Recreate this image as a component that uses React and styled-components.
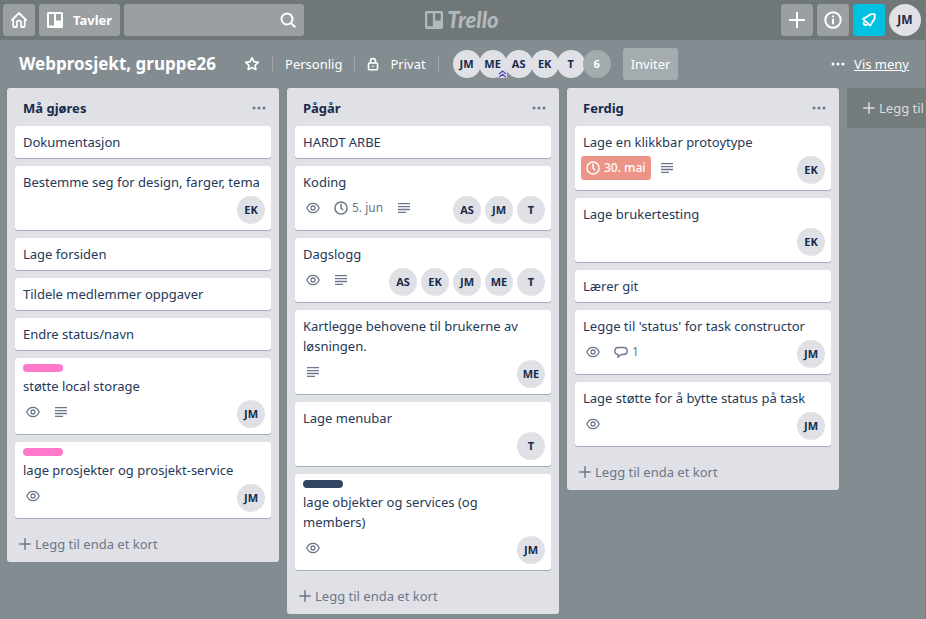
import React from "react";
import styled, { createGlobalStyle, css } from "styled-components";

const GlobalStyle = createGlobalStyle`
  *, *::before, *::after { box-sizing: border-box; }
  html, body, #root { height: 100%; }
  body {
    margin: 0;
    background: #838c91;
    color: #172b4d;
    font-family: "Noto Sans", "Open Sans", sans-serif;
    font-size: 13px;
    line-height: 20px;
  }
  button, input { font: inherit; color: inherit; }
  button { border: 0; padding: 0; background: none; cursor: pointer; }
  svg { display: block; flex: none; }
`;

const Page = styled.div`
  display: flex;
  flex-direction: column;
  min-height: 100vh;
  overflow: hidden;
  border-right: 1px solid #4c83c3;
`;

const TopBar = styled.header`
  display: grid;
  grid-template-columns: 1fr auto 1fr;
  align-items: center;
  padding: 4px 4px 4px 3px;
  background: #6f7779;
`;

const BarGroup = styled.div`
  display: flex;
  gap: 4px;
  justify-content: ${(p) => (p.$end ? "flex-end" : "flex-start")};
`;

const BarButton = styled.button`
  display: flex;
  align-items: center;
  justify-content: center;
  gap: 10px;
  min-width: 32px;
  height: 32px;
  padding: ${(p) => (p.$wide ? "0 8px" : "0")};
  border-radius: 3px;
  background: ${(p) => (p.$alert ? "#00c2e0" : "#9a9fa1")};
  color: #fff;
  font-weight: 700;
`;

const SearchBox = styled.label`
  display: flex;
  align-items: center;
  width: 180px;
  height: 32px;
  padding-right: 6px;
  border-radius: 3px;
  background: #9a9fa1;
  color: #fff;
`;

const SearchInput = styled.input`
  flex: 1;
  min-width: 0;
  height: 100%;
  padding: 0 8px;
  border: 0;
  outline: 0;
  background: transparent;
`;

const Brand = styled.a`
  display: flex;
  align-items: center;
  gap: 4px;
  color: #b3b9bb;
  text-decoration: none;
`;

const BrandName = styled.span`
  font-family: Lato, sans-serif;
  font-size: 22px;
  font-style: italic;
  font-weight: 900;
  line-height: 24px;
`;

const Avatar = styled.button`
  position: relative;
  display: flex;
  align-items: center;
  justify-content: center;
  flex: none;
  width: ${(p) => (p.$large ? 32 : 28)}px;
  height: ${(p) => (p.$large ? 32 : 28)}px;
  border-radius: 50%;
  background: ${(p) => (p.$more ? "#a3abae" : "#dfe1e6")};
  color: ${(p) => (p.$more ? "#fff" : "#172b4d")};
  font-size: ${(p) => (p.$large ? 12 : 11)}px;
  font-weight: 700;
`;

const AdminMark = styled.span`
  position: absolute;
  right: 0;
  bottom: 0;
`;

const BoardBar = styled.div`
  display: flex;
  align-items: center;
  height: 48px;
  padding: 0 16px 0 19px;
  color: #fff;
  white-space: nowrap;
`;

const BoardTitle = styled.h1`
  margin: 0 28px 0 0;
  font-size: 17px;
  font-weight: 700;
  line-height: 24px;
`;

const BoardAction = styled.button`
  display: flex;
  align-items: center;
  gap: 11px;
`;

const Divider = styled.span`
  width: 1px;
  height: 16px;
  margin: 0 12px;
  background: #a0a7aa;
`;

const Facepile = styled.div`
  display: flex;
  margin: 0 12px 0 2px;

  ${Avatar} + ${Avatar} { margin-left: -2px; }
`;

const InviteButton = styled.button`
  height: 32px;
  padding: 0 8px;
  border-radius: 3px;
  background: #a5acaf;
`;

const MenuLink = styled.a`
  display: flex;
  align-items: center;
  gap: 9px;
  margin-left: auto;
  color: #fff;
  text-decoration: none;

  span { text-decoration: underline; }
`;

const Lists = styled.main`
  display: flex;
  align-items: flex-start;
  gap: 8px;
  padding: 0 0 4px 7px;
`;

const List = styled.section`
  flex: none;
  width: 272px;
  border-radius: 3px;
  background: #dfe1e6;
`;

const ListHeader = styled.div`
  display: flex;
  align-items: center;
  justify-content: space-between;
  height: 38px;
  padding: 2px 13px 0 16px;
`;

const ListTitle = styled.h2`
  margin: 0;
  font-size: 13px;
  font-weight: 700;
  line-height: 20px;
`;

const IconButton = styled.button`
  color: #6b778c;
`;

const Cards = styled.div`
  display: flex;
  flex-direction: column;
  gap: 8px;
  padding: 0 8px;
`;

const CardBox = styled.article`
  padding: 6px 6px 2px;
  border-radius: 3px;
  background: #fff;
  box-shadow: 0 1px 0 #a5afbf;
  color: #253858;
`;

const Label = styled.div`
  width: 40px;
  height: 8px;
  margin: 0 2px 4px;
  border-radius: 4px;
  background: ${(p) => p.$color};
`;

const CardTitle = styled.p`
  margin: 0 2px 4px;
`;

const CardFooter = styled.div`
  display: flex;
  align-items: flex-start;
  justify-content: space-between;
`;

const Badges = styled.div`
  display: flex;
  gap: 4px;
`;

const Badge = styled.span`
  display: flex;
  align-items: center;
  gap: 4px;
  height: 24px;
  padding: 0 5px;
  border-radius: 3px;
  color: #6b778c;
  font-size: 12px;
  ${(p) =>
    p.$late &&
    css`
      background: #ec9488;
      color: #fff;
      font-weight: 500;
    `}
`;

const Members = styled.div`
  display: flex;
  gap: 4px;
  padding-bottom: 4px;
`;

const AddCard = styled.button`
  display: flex;
  align-items: center;
  gap: 4px;
  width: 100%;
  height: 36px;
  margin-top: 8px;
  padding: 0 12px;
  color: #6b778c;
`;

const AddList = styled.button`
  display: flex;
  align-items: center;
  gap: 4px;
  flex: none;
  width: 272px;
  height: 40px;
  padding: 0 16px;
  border-radius: 3px;
  background: #747b7d;
  color: #dadcdd;
`;

const stroke = { fill: "none", stroke: "currentColor", strokeLinejoin: "round", strokeLinecap: "round" };

const HomeIcon = () => (
  <svg width="18" height="18" viewBox="0 0 18 18" {...stroke} strokeWidth="1.8">
    <path d="M2 9 9 2l7 7M3.2 8.5v6.2q0 1.3 1.3 1.3h2.3v-4.4q0-2 2.2-2t2.2 2V16h2.3q1.3 0 1.3-1.3V8.500" />
  </svg>
);

const BoardIcon = ({ width = 16, height = 16 }) => (
  <svg width={width} height={height} viewBox="0 0 16 16" preserveAspectRatio="none" fill="currentColor">
    <path fillRule="evenodd" d="M1.500 0h13A1.500 1.500 0 0 1 16 1.500v13a1.500 1.500 0 0 1-1.500 1.500h-13A1.500 1.500 0 0 1 0 14.500v-13A1.500 1.500 0 0 1 1.500 0zM2 2v11.500h5V2zm7 0v6.500h5V2z" />
  </svg>
);

const SearchIcon = () => (
  <svg width="20" height="20" viewBox="0 0 20 20" {...stroke} strokeWidth="2">
    <circle cx="9" cy="9" r="5.500" />
    <path d="m13.200 13.200 3.600 3.600" />
  </svg>
);

const PlusIcon = ({ size = 12, weight = 1.5 }) => (
  <svg width={size} height={size} viewBox={`0 0 ${size} ${size}`} {...stroke} strokeWidth={weight}>
    <path d={`M${size / 2} .800v${size - 1.6}M.800 ${size / 2}h${size - 1.6}`} />
  </svg>
);

const InfoIcon = () => (
  <svg width="18" height="18" viewBox="0 0 18 18" {...stroke} strokeWidth="2">
    <circle cx="9" cy="9" r="7.700" />
    <path d="M9 8.500v4M9 5.300v.100" />
  </svg>
);

const BellIcon = () => (
  <svg width="16" height="16" viewBox="0 0 16 16" {...stroke} strokeWidth="1.800">
    <path d="M2 6.800 9.200 13.600 11.600 9.600Q13.800 7.600 13.800 5V2.200H11Q8.600 2.200 6.600 4.400z" />
    <path d="M3 10.200q-1.400 2.800 2.800 2.800" />
  </svg>
);

const StarIcon = () => (
  <svg width="16" height="16" viewBox="0 0 16 16" {...stroke} strokeWidth="1.700">
    <path d="m8 1.800 1.900 3.900 4.300.600-3.100 3 .700 4.300L8 11.600l-3.800 2 .700-4.300-3.100-3 4.300-.600z" />
  </svg>
);

const LockIcon = () => (
  <svg width="12" height="14" viewBox="0 0 12 14" {...stroke} strokeWidth="1.600">
    <rect x="1.500" y="6" width="9" height="6.700" rx="1" />
    <path d="M3.500 5.800V4Q3.500 1.500 6 1.500T8.500 4v1.800M6 9.200v.300" />
  </svg>
);

const DotsIcon = () => (
  <svg width="14" height="4" viewBox="0 0 14 4" fill="currentColor">
    <circle cx="2" cy="2" r="1.500" />
    <circle cx="7" cy="2" r="1.500" />
    <circle cx="12" cy="2" r="1.500" />
  </svg>
);

const AdminIcon = () => (
  <svg width="9" height="8" viewBox="0 0 9 8">
    <path d="M0 0h9v8H0z" fill="#dfe1e6" />
    <path d="M1 4 4.500 1 8 4M1 7.300l3.500-3 3.500 3" fill="none" stroke="#4a43c4" strokeWidth="1.200" />
  </svg>
);

const EyeIcon = () => (
  <svg width="14" height="14" viewBox="0 0 14 14" {...stroke} strokeWidth="1.300">
    <path d="M.800 7Q2.800 2.300 7 2.300T13.200 7Q11.200 11.700 7 11.700T.800 7z" />
    <circle cx="7" cy="7" r="2" />
  </svg>
);

const ClockIcon = () => (
  <svg width="14" height="14" viewBox="0 0 14 14" {...stroke} strokeWidth="1.500">
    <circle cx="7" cy="7" r="6.100" />
    <path d="M7 3.300V7l1.600 1.800" />
  </svg>
);

const TextIcon = () => (
  <svg width="14" height="14" viewBox="0 0 14 14" fill="none" stroke="currentColor" strokeWidth="1.300">
    <path d="M1 2.600h12M1 5.600h12M1 8.500h12M1 11.400h8" />
  </svg>
);

const CommentIcon = () => (
  <svg width="14" height="14" viewBox="0 0 14 14" {...stroke} strokeWidth="1.400">
    <path d="M4.300 2.500h5.400Q13.200 2.500 13.200 6T9.700 9.500H7.200L4 12.300V9.500Q.800 9.300.800 6T4.300 2.500z" />
  </svg>
);

const badgeKinds = {
  watch: { icon: EyeIcon, name: "Følger" },
  due: { icon: ClockIcon, name: "Frist" },
  late: { icon: ClockIcon, name: "Frist" },
  text: { icon: TextIcon, name: "Beskrivelse" },
  comment: { icon: CommentIcon, name: "Kommentarer" },
};

const lists = [
  {
    title: "Må gjøres",
    cards: [
      { title: "Dokumentasjon" },
      { title: "Bestemme seg for design, farger, tema", members: ["EK"] },
      { title: "Lage forsiden" },
      { title: "Tildele medlemmer oppgaver" },
      { title: "Endre status/navn" },
      { title: "støtte local storage", label: "#ff78cb", badges: [["watch"], ["text"]], members: ["JM"] },
      { title: "lage prosjekter og prosjekt-service", label: "#ff78cb", badges: [["watch"]], members: ["JM"] },
    ],
  },
  {
    title: "Pågår",
    cards: [
      { title: "HARDT ARBE" },
      { title: "Koding", badges: [["watch"], ["due", "5. jun"], ["text"]], members: ["AS", "JM", "T"] },
      { title: "Dagslogg", badges: [["watch"], ["text"]], members: ["AS", "EK", "JM", "ME", "T"] },
      { title: "Kartlegge behovene til brukerne av løsningen.", badges: [["text"]], members: ["ME"] },
      { title: "Lage menubar", members: ["T"] },
      { title: "lage objekter og services (og members)", label: "#344563", badges: [["watch"]], members: ["JM"] },
    ],
  },
  {
    title: "Ferdig",
    cards: [
      { title: "Lage en klikkbar protoytype", badges: [["late", "30. mai"], ["text"]], members: ["EK"] },
      { title: "Lage brukertesting", members: ["EK"] },
      { title: "Lærer git" },
      { title: "Legge til 'status' for task constructor", badges: [["watch"], ["comment", "1"]], members: ["JM"] },
      { title: "Lage støtte for å bytte status på task", badges: [["watch"]], members: ["JM"] },
    ],
  },
];

function Card({ title, label, badges = [], members = [] }) {
  return (
    <CardBox>
      {label && <Label $color={label} />}
      <CardTitle>{title}</CardTitle>
      {members.length > 0 && (
        <CardFooter>
          <Badges>
            {badges.map(([kind, text]) => {
              const { icon: Icon, name } = badgeKinds[kind];
              return (
                <Badge key={kind} $late={kind === "late"} title={name}>
                  <Icon />
                  {text}
                </Badge>
              );
            })}
          </Badges>
          <Members>
            {members.map((m) => (
              <Avatar key={m}>{m}</Avatar>
            ))}
          </Members>
        </CardFooter>
      )}
    </CardBox>
  );
}

export default function App() {
  return (
    <>
      <GlobalStyle />
      <Page>
        <TopBar>
          <BarGroup>
            <BarButton aria-label="Hjem"><HomeIcon /></BarButton>
            <BarButton $wide><BoardIcon />Tavler</BarButton>
            <SearchBox>
              <SearchInput type="text" aria-label="Søk" />
              <SearchIcon />
            </SearchBox>
          </BarGroup>
          <Brand href="#">
            <BoardIcon width={18} height={18} />
            <BrandName>Trello</BrandName>
          </Brand>
          <BarGroup $end>
            <BarButton aria-label="Opprett"><PlusIcon size={16} weight={2} /></BarButton>
            <BarButton aria-label="Informasjon"><InfoIcon /></BarButton>
            <BarButton $alert aria-label="Varsler"><BellIcon /></BarButton>
            <Avatar $large>JM</Avatar>
          </BarGroup>
        </TopBar>

        <BoardBar>
          <BoardTitle>Webprosjekt, gruppe26</BoardTitle>
          <BoardAction aria-label="Stjernemerk"><StarIcon /></BoardAction>
          <Divider />
          <BoardAction>Personlig</BoardAction>
          <Divider />
          <BoardAction><LockIcon />Privat</BoardAction>
          <Divider />
          <Facepile>
            <Avatar>JM</Avatar>
            <Avatar>ME<AdminMark><AdminIcon /></AdminMark></Avatar>
            <Avatar>AS</Avatar>
            <Avatar>EK</Avatar>
            <Avatar>T</Avatar>
            <Avatar $more>6</Avatar>
          </Facepile>
          <InviteButton>Inviter</InviteButton>
          <MenuLink href="#"><DotsIcon /><span>Vis meny</span></MenuLink>
        </BoardBar>

        <Lists>
          {lists.map((list) => (
            <List key={list.title}>
              <ListHeader>
                <ListTitle>{list.title}</ListTitle>
                <IconButton aria-label="Listemeny"><DotsIcon /></IconButton>
              </ListHeader>
              <Cards>
                {list.cards.map((card) => (
                  <Card key={card.title} {...card} />
                ))}
              </Cards>
              <AddCard><PlusIcon />Legg til enda et kort</AddCard>
            </List>
          ))}
          <AddList><PlusIcon />Legg til</AddList>
        </Lists>
      </Page>
    </>
  );
}
